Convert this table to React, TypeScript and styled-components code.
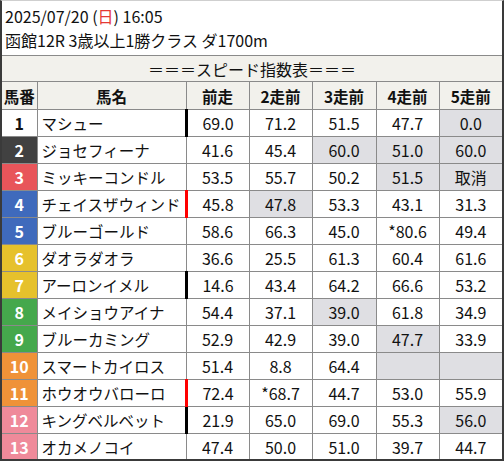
import React from 'react';
import styled, { createGlobalStyle } from 'styled-components';

const GlobalStyle = createGlobalStyle`
    body {
        margin: 0;
        background: #ffffff;
        font-family: "Noto Sans CJK JP", "Noto Sans", sans-serif;
        color: #111;
    }
`;

const Frame = styled.div`
    width: 504px;
    height: 461px;
    box-sizing: border-box;
    border-left: 2px solid #3a3a3a;
    border-right: 2px solid #3a3a3a;
    border-bottom: 2px solid #3a3a3a;
    border-top: 1px solid #cfcfcf;
    background: #fff;
    overflow: hidden;
`;

const Info = styled.div`
    height: 54px;
    box-sizing: border-box;
    padding: 3px 0 0 3px;
    font-size: 16px;
    line-height: 24px;
`;

const Sunday = styled.span`
    color: #e53935;
`;

const Table = styled.table`
    width: 500px;
    border-collapse: collapse;
    table-layout: fixed;
`;

const Col = styled.col<{ $w: number }>`
    width: ${p => p.$w}px;
`;

const TitleCell = styled.td`
    height: 25px;
    padding: 0;
    background: #f2f1ec;
    border-top: 1px solid #8a8a8a;
    border-bottom: 1px solid #8a8a8a;
    text-align: center;
    font-size: 16px;
    line-height: 24px;
`;

const HeadCell = styled.th`
    height: 27px;
    padding: 0;
    background: #f2f1ec;
    border: 1px solid #8a8a8a;
    font-size: 15.5px;
    font-weight: bold;
    text-align: center;
    &:first-child { border-left: none; }
    &:last-child { border-right: none; }
`;

const NumCell = styled.td<{ $bg: string; $fg: string }>`
    height: 26px;
    padding: 0;
    border: 1px solid #8a8a8a;
    border-left: none;
    background: ${p => p.$bg};
    color: ${p => p.$fg};
    font-size: 16px;
    font-weight: bold;
    text-align: center;
`;

const NameCell = styled.td`
    padding: 0 0 0 4px;
    border: 1px solid #8a8a8a;
    font-size: 15.5px;
    white-space: nowrap;
    overflow: hidden;
`;

const ScoreCell = styled.td<{ $grey?: boolean; $mark?: string }>`
    padding: 0;
    border: 1px solid #8a8a8a;
    ${p => p.$mark ? `border-left: 3px solid ${p.$mark};` : ''}
    background: ${p => (p.$grey ? '#dfdfe3' : '#fff')};
    font-size: 16px;
    text-align: center;
    &:last-child { border-right: none; }
`;

type Horse = {
    no: number;
    name: string;
    scores: string[];
    grey: number[];
    mark?: string;
};

const frameColors: Record<number, [string, string]> = {
    1: ['#ffffff', '#111111'],
    2: ['#414141', '#ffffff'],
    3: ['#e8555a', '#ffffff'],
    4: ['#3f6abc', '#ffffff'],
    5: ['#3f6abc', '#ffffff'],
    6: ['#e6c12c', '#ffffff'],
    7: ['#e6c12c', '#ffffff'],
    8: ['#45a84c', '#ffffff'],
    9: ['#45a84c', '#ffffff'],
    10: ['#ef9238', '#ffffff'],
    11: ['#ef9238', '#ffffff'],
    12: ['#ef8a9a', '#ffffff'],
    13: ['#ef8a9a', '#ffffff'],
};

const horses: Horse[] = [
    { no: 1, name: 'マシュー', scores: ['69.0', '71.2', '51.5', '47.7', '0.0'], grey: [4], mark: '#000' },
    { no: 2, name: 'ジョセフィーナ', scores: ['41.6', '45.4', '60.0', '51.0', '60.0'], grey: [2, 3, 4] },
    { no: 3, name: 'ミッキーコンドル', scores: ['53.5', '55.7', '50.2', '51.5', '取消'], grey: [3, 4] },
    { no: 4, name: 'チェイスザウィンド', scores: ['45.8', '47.8', '53.3', '43.1', '31.3'], grey: [1], mark: '#ff0000' },
    { no: 5, name: 'ブルーゴールド', scores: ['58.6', '66.3', '45.0', '*80.6', '49.4'], grey: [] },
    { no: 6, name: 'ダオラダオラ', scores: ['36.6', '25.5', '61.3', '60.4', '61.6'], grey: [] },
    { no: 7, name: 'アーロンイメル', scores: ['14.6', '43.4', '64.2', '66.6', '53.2'], grey: [], mark: '#000' },
    { no: 8, name: 'メイショウアイナ', scores: ['54.4', '37.1', '39.0', '61.8', '34.9'], grey: [2] },
    { no: 9, name: 'ブルーカミング', scores: ['52.9', '42.9', '39.0', '47.7', '33.9'], grey: [3] },
    { no: 10, name: 'スマートカイロス', scores: ['51.4', '8.8', '64.4', '', ''], grey: [3, 4] },
    { no: 11, name: 'ホウオウバローロ', scores: ['72.4', '*68.7', '44.7', '53.0', '55.9'], grey: [], mark: '#ff0000' },
    { no: 12, name: 'キングベルベット', scores: ['21.9', '65.0', '69.0', '55.3', '56.0'], grey: [4], mark: '#000' },
    { no: 13, name: 'オカメノコイ', scores: ['47.4', '50.0', '51.0', '39.7', '44.7'], grey: [] },
];

const heads = ['前走', '2走前', '3走前', '4走前', '5走前'];
const colWidths = [35, 149, 63, 63, 64, 63, 63];

export default function App() {
    return (
        <>
            <GlobalStyle />
            <Frame>
                <Info>
                    <div>2025/07/20 (<Sunday>日</Sunday>) 16:05</div>
                    <div>函館12R 3歳以上1勝クラス ダ1700m</div>
                </Info>
                <Table>
                    <colgroup>
                        {colWidths.map((w, i) => <Col key={i} $w={w} />)}
                    </colgroup>
                    <thead>
                        <tr>
                            <TitleCell colSpan={7}>＝＝＝スピード指数表＝＝＝</TitleCell>
                        </tr>
                        <tr>
                            <HeadCell>馬番</HeadCell>
                            <HeadCell>馬名</HeadCell>
                            {heads.map(h => <HeadCell key={h}>{h}</HeadCell>)}
                        </tr>
                    </thead>
                    <tbody>
                        {horses.map(h => {
                            const [bg, fg] = frameColors[h.no];
                            return (
                                <tr key={h.no}>
                                    <NumCell $bg={bg} $fg={fg}>{h.no}</NumCell>
                                    <NameCell>{h.name}</NameCell>
                                    {h.scores.map((s, i) => (
                                        <ScoreCell
                                            key={i}
                                            $grey={h.grey.includes(i)}
                                            $mark={i === 0 ? h.mark : undefined}
                                        >
                                            {s}
                                        </ScoreCell>
                                    ))}
                                </tr>
                            );
                        })}
                    </tbody>
                </Table>
            </Frame>
        </>
    );
}
